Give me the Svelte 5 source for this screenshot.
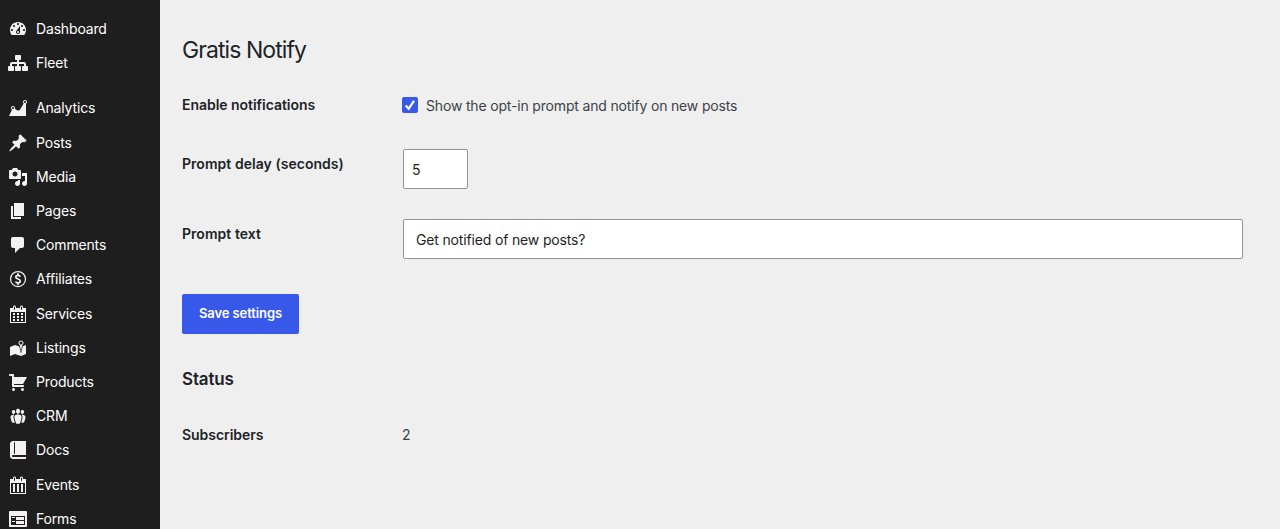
<script>
  const ring = 'M15 4h3v15H2V4h3V3c0-.41.15-.76.44-1.06.29-.29.65-.44 1.06-.44s.77.15 1.06.44c.29.3.44.65.44 1.06v1h4V3c0-.41.15-.76.44-1.06.29-.29.65-.44 1.06-.44s.77.15 1.06.44c.29.3.44.65.44 1.06v1zM6 3v2.5c0 .14.05.26.15.36.09.09.21.14.35.14s.26-.05.35-.14c.1-.1.15-.22.15-.36V3c0-.14-.05-.26-.15-.35-.09-.1-.21-.15-.35-.15s-.26.05-.35.15c-.1.09-.15.21-.15.35zm7 0v2.5c0 .14.05.26.14.36.1.09.22.14.36.14s.26-.05.36-.14c.09-.1.14-.22.14-.36V3c0-.14-.05-.26-.14-.35-.1-.1-.22-.15-.36-.15s-.26.05-.36.15c-.09.09-.14.21-.14.35zm4 15V8H3v10h14z';
  const groups = [
    [
      { label: 'Dashboard', d: 'M3.76 16h12.48c1.1-1.37 1.76-3.11 1.76-5 0-4.42-3.58-8-8-8s-8 3.58-8 8c0 1.89.66 3.63 1.76 5zM10 4c.55 0 1 .45 1 1s-.45 1-1 1-1-.45-1-1 .45-1 1-1zM6 6c.55 0 1 .45 1 1s-.45 1-1 1-1-.45-1-1 .45-1 1-1zm8 0c.55 0 1 .45 1 1s-.45 1-1 1-1-.45-1-1 .45-1 1-1zm-5.37 5.55L12 7v6c0 1.1-.9 2-2 2s-2-.9-2-2c0-.57.24-1.08.63-1.45zM4 10c.55 0 1 .45 1 1s-.45 1-1 1-1-.45-1-1 .45-1 1-1zm12 0c.55 0 1 .45 1 1s-.45 1-1 1-1-.45-1-1 .45-1 1-1zm-5 3c0-.55-.45-1-1-1s-1 .45-1 1 .45 1 1 1 1-.45 1-1z' },
      { label: 'Fleet', d: 'M18 13h1c.55 0 1 .45 1 1.01v2.98c0 .56-.45 1.01-1 1.01h-4c-.55 0-1-.45-1-1.01v-2.98c0-.56.45-1.01 1-1.01h1v-2h-5v2h1c.55 0 1 .45 1 1.01v2.98c0 .56-.45 1.01-1 1.01H8c-.55 0-1-.45-1-1.01v-2.98c0-.56.45-1.01 1-1.01h1v-2H4v2h1c.55 0 1 .45 1 1.01v2.98C6 17.55 5.55 18 5 18H1c-.55 0-1-.45-1-1.01v-2.98C0 13.45.45 13 1 13h1v-2c0-1.1.9-2 2-2h5V7H8c-.55 0-1-.45-1-1.01V3.01C7 2.45 7.45 2 8 2h4c.55 0 1 .45 1 1.01v2.98C13 6.55 12.55 7 12 7h-1v2h5c1.1 0 2 .9 2 2v2z' },
    ],
    [
      { label: 'Analytics', d: 'M18 18V5.72c.6-.35 1-.99 1-1.72 0-1.1-.9-2-2-2s-2 .9-2 2c0 .6.25 1.1.65 1.5L11.6 12.2 9.4 12.4 6.85 10.8C6.95 10.6 7 10.3 7 10c0-1.1-.9-2-2-2s-2 .9-2 2c0 .73.4 1.36.98 1.71L1 18h17zM17 3c.55 0 1 .45 1 1s-.45 1-1 1-1-.45-1-1 .45-1 1-1zM5 9c.55 0 1 .45 1 1s-.45 1-1 1-1-.45-1-1 .45-1 1-1z' },
      { label: 'Posts', d: 'M10.44 3.02l1.82-1.82 6.36 6.35-1.83 1.82c-1.05-.68-2.48-.57-3.41.36l-.75.75c-.92.93-1.04 2.35-.35 3.41l-1.83 1.82-2.41-2.41-2.8 2.79c-.42.42-3.38 2.71-3.8 2.29s1.86-3.39 2.28-3.81l2.79-2.79L4.1 9.36l1.83-1.82c1.05.69 2.48.57 3.4-.36l.75-.75c.93-.92 1.05-2.35.36-3.41z' },
      { label: 'Media', d: 'M13 11V4c0-.55-.45-1-1-1h-1.67L9 1H5L3.67 3H2c-.55 0-1 .45-1 1v7c0 .55.45 1 1 1h10c.55 0 1-.45 1-1zM7 4.5c1.38 0 2.5 1.12 2.5 2.5S8.38 9.5 7 9.5 4.5 8.38 4.5 7 5.62 4.5 7 4.5zM14 6h5v10.5c0 1.38-1.12 2.5-2.5 2.5S14 17.88 14 16.5s1.12-2.5 2.5-2.5c.17 0 .34.02.5.05V9h-3V6zm-4 8.05V13h2v3.5c0 1.38-1.12 2.5-2.5 2.5S7 17.88 7 16.5 8.12 14 9.5 14c.17 0 .34.02.5.05z' },
      { label: 'Pages', d: 'M6 15V2h10v13H6zm-1 1h8v2H3V5h2v11z' },
      { label: 'Comments', d: 'M5 2h9c1.1 0 2 .9 2 2v7c0 1.1-.9 2-2 2h-2l-5 5v-5H5c-1.1 0-2-.9-2-2V4c0-1.1.9-2 2-2z' },
      { label: 'Affiliates', line: true, d: 'M10 2.6a7.5 7.5 0 1 0 0 15a7.5 7.5 0 1 0 0-15z', mark: 'M10 4.2v2M10 14v2M12.3 7.8C12 6.9 11.2 6.4 10 6.4c-1.4 0-2.2.7-2.2 1.7 0 2.5 4.5 1.4 4.5 3.9 0 1.1-.9 1.8-2.3 1.8-1.3 0-2.1-.5-2.4-1.4' },
      { label: 'Services', d: ring + 'M7 9v2H5V9h2zm2 0h2v2H9V9zm4 2V9h2v2h-2zm-6 1v2H5v-2h2zm2 0h2v2H9v-2zm4 2v-2h2v2h-2zm-6 1v2H5v-2h2zm4 2H9v-2h2v2zm4 0h-2v-2h2v2z' },
      { label: 'Listings', d: 'M13 13.14l1.17-5.94c.79-.43 1.33-1.25 1.33-2.2 0-1.38-1.12-2.5-2.5-2.5S10.5 3.62 10.5 5c0 .95.54 1.77 1.33 2.2zm0-9.64c.83 0 1.5.67 1.5 1.5s-.67 1.5-1.5 1.5-1.5-.67-1.5-1.5.67-1.5 1.5-1.5zm1.72 4.8L18 6.97v9L13.12 18 7 15.97l-5 2v-9l5-2 4.27 1.41 1.73 7.3z' },
      { label: 'Products', d: 'M6 13h9c.55 0 1 .45 1 1s-.45 1-1 1H5c-.55 0-1-.45-1-1V4H2c-.55 0-1-.45-1-1s.45-1 1-1h3c.55 0 1 .45 1 1v2h13l-4 7H6v1zm-.5 3c.83 0 1.5.67 1.5 1.5S6.33 19 5.5 19 4 18.33 4 17.5 4.67 16 5.5 16zm9 0c.83 0 1.5.67 1.5 1.5s-.67 1.5-1.5 1.5-1.5-.67-1.5-1.5.67-1.5 1.5-1.5z' },
      { label: 'CRM', d: 'M8.03 4.46c-.29 1.28.55 3.46 1.97 3.46 1.41 0 2.25-2.18 1.96-3.46-.22-.98-1.08-1.63-1.96-1.63-.89 0-1.74.65-1.97 1.63zm-4.13.9c-.25 1.08.47 2.93 1.67 2.93s1.92-1.85 1.67-2.93c-.19-.83-.92-1.39-1.67-1.39s-1.48.56-1.67 1.39zm8.86 0c-.25 1.08.47 2.93 1.66 2.93 1.2 0 1.92-1.85 1.67-2.93-.19-.83-.92-1.39-1.67-1.39-.74 0-1.47.56-1.66 1.39zm-.59 11.43l1.25-4.3C14.2 10 12.71 8.47 10 8.47c-2.72 0-4.21 1.53-3.44 4.02l1.26 4.3C8.05 17.51 9 18 10 18c.98 0 1.94-.49 2.17-1.21zm-6.1-7.63c-.49.67-.96 1.83-.42 3.59l1.12 3.79c-.34.2-.77.31-1.2.31-.85 0-1.65-.41-1.85-1.03l-1.07-3.65c-.65-2.11.61-3.4 2.92-3.4.27 0 .54.02.79.06-.1.1-.2.22-.29.33zm8.35-.39c2.31 0 3.58 1.29 2.92 3.4l-1.07 3.65c-.2.62-1 1.03-1.85 1.03-.43 0-.86-.11-1.2-.31l1.11-3.77c.55-1.78.08-2.94-.42-3.61-.08-.11-.18-.23-.28-.33.25-.04.51-.06.79-.06z' },
      { label: 'Docs', d: 'M5 17h13v2H5c-1.66 0-3-1.34-3-3V4c0-1.66 1.34-3 3-3h13v14H5c-.55 0-1 .45-1 1s.45 1 1 1zm2-3.5v-11c0-.28-.22-.5-.5-.5s-.5.22-.5.5v11c0 .28.22.5.5.5s.5-.22.5-.5z' },
      { label: 'Events', d: ring + 'M7 9v8H5V9h2zm4 0v8H9V9h2zm4 0v8h-2V9h2z' },
      { label: 'Forms', d: 'M2 2h16c.55 0 1 .45 1 1v14c0 .55-.45 1-1 1H2c-.55 0-1-.45-1-1V3c0-.55.45-1 1-1zm15 14V7H3v9h14zM4 8v1h3V8H4zm4 0v3h8V8H8zm-4 4v1h3v-1H4zm4 0v3h8v-3H8z' },
    ],
  ];
  let enabled = $state(true);
  let delay = $state('5');
  let prompt = $state('Get notified of new posts?');
</script>

<div class="page">
  <nav>
    {#each groups as items}
      <ul>
        {#each items as item}
          <li>
            <svg viewBox="0 0 20 20" class:line={item.line}>
              <path d={item.d} />
              {#if item.mark}<path class="mark" d={item.mark} />{/if}
            </svg>
            <span>{item.label}</span>
          </li>
        {/each}
      </ul>
    {/each}
  </nav>
  <main>
    <h1>Gratis Notify</h1>
    <div class="row enable">
      <span class="name">Enable notifications</span>
      <label class="check">
        <input type="checkbox" bind:checked={enabled} />
        <svg viewBox="0 0 16 16"><path d="M3.7 8.4l3 3.3 5.3-7.9" /></svg>
        <span>Show the opt-in prompt and notify on new posts</span>
      </label>
    </div>
    <div class="row field">
      <label class="name wide" for="delay">Prompt delay (seconds)</label>
      <input id="delay" class="text small" bind:value={delay} />
    </div>
    <div class="row field">
      <label class="name wide" for="prompt">Prompt text</label>
      <input id="prompt" class="text" bind:value={prompt} />
    </div>
    <button>Save settings</button>
    <h2>Status</h2>
    <div class="row">
      <span class="name">Subscribers</span>
      <span class="value">2</span>
    </div>
  </main>
</div>

<style>
  :global(body) { background: #efefef; overflow: hidden; }
  .page {
    display: flex;
    height: 529px;
    overflow: hidden;
    font: 14px/20px Inter, "Liberation Sans", sans-serif;
    color: #1d2327;
  }
  nav {
    width: 160px;
    flex: none;
    padding-top: 12px;
    box-sizing: border-box;
    background: #1e1e1e;
    color: #fff;
  }
  ul { list-style: none; margin: 0 0 11px; padding: 0; }
  li { display: flex; align-items: center; gap: 8px; height: 34.1875px; padding-left: 8px; letter-spacing: -0.16px; }
  li svg { width: 20px; height: 20px; flex: none; fill: #f3f1f1; fill-rule: evenodd; }
  li svg.line { fill: none; stroke: #f3f1f1; stroke-width: 1.2; }
  .mark { stroke-width: 1.7; }
  main { flex: 1; padding: 35px 37px 0 22px; }
  h1 { margin: 0; font-size: 23px; line-height: 30px; font-weight: 400; letter-spacing: -0.93px; }
  h2 { margin: 35px 0 0; font-size: 17px; line-height: 20px; font-weight: 600; letter-spacing: -0.15px; }
  .row { display: grid; grid-template-columns: 220px 1fr; align-items: start; }
  .name { font-weight: 600; letter-spacing: -0.04px; }
  .wide { letter-spacing: 0.04px; }
  .enable { margin-top: 30px; }
  .check { display: grid; grid-template-columns: 16px auto; justify-content: start; column-gap: 8px; align-items: center; color: #3c434a; }
  .check input, .check svg { grid-area: 1 / 1; width: 16px; height: 16px; margin: 0; }
  .check input { appearance: none; border-radius: 2px; background: #3858e9; }
  .check svg { fill: none; stroke: #fff; stroke-width: 2.2; pointer-events: none; }
  .check span { padding-top: 1px; margin-bottom: -1px; letter-spacing: -0.17px; }
  .field { margin-top: 34px; }
  .field + .field { margin-top: 30px; }
  .field .name { padding-top: 5px; }
  .text {
    box-sizing: border-box;
    width: 840px;
    height: 40px;
    margin: 0 0 0 1px;
    padding: 0 12px;
    border: 1px solid #949494;
    border-radius: 2px;
    background: #fff;
    color: #1e1e1e;
    font: inherit;
    letter-spacing: -0.16px;
  }
  .small { width: 65px; padding: 0 8px; }
  button {
    display: block;
    width: 117px;
    height: 40px;
    margin-top: 35px;
    padding: 0 0 2px;
    border: 0;
    border-radius: 2px;
    background: #3858e9;
    color: #fff;
    font: 600 13px/20px Inter, "Liberation Sans", sans-serif;
    letter-spacing: -0.1px;
  }
  h2 + .row { margin-top: 36px; }
  .value { color: #3c434a; }
</style>
